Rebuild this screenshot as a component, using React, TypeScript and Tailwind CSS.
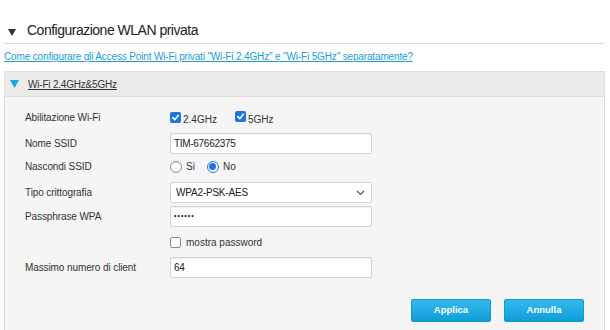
import React from "react";

const font = { fontFamily: "'Liberation Sans', Arial, sans-serif" };

const CheckBox = ({ checked }: { checked: boolean }) =>
  checked ? (
    <span className="inline-flex h-[11px] w-[11px] items-center justify-center rounded-[2px] bg-[#1b76e4]">
      <svg width="9" height="9" viewBox="0 0 10 10">
        <path d="M2 5.2 L4.2 7.4 L8.2 2.6" fill="none" stroke="#fff" strokeWidth="1.8" strokeLinecap="round" strokeLinejoin="round" />
      </svg>
    </span>
  ) : (
    <span className="inline-block h-[11px] w-[11px] rounded-[2px] border border-[#8a8a8a] bg-white" />
  );

const Radio = ({ checked }: { checked: boolean }) =>
  checked ? (
    <span className="inline-flex h-[12px] w-[12px] items-center justify-center rounded-full border border-[#1b76e4] bg-white">
      <span className="h-[7px] w-[7px] rounded-full bg-[#1b76e4]" />
    </span>
  ) : (
    <span className="inline-block h-[12px] w-[12px] rounded-full border border-[#8a8a8a] bg-white" />
  );

const Field = ({ children }: { children?: React.ReactNode }) => (
  <div className="flex h-[21px] w-[202px] items-center rounded-[2px] border border-[#d3d3d3] bg-white px-[3px] text-[10px] tracking-[-0.3px] text-[#222] shadow-[inset_0_1px_1px_rgba(0,0,0,0.06)]">
    {children}
  </div>
);

const Row = ({
  label,
  className,
  children,
}: {
  label?: string;
  className: string;
  children: React.ReactNode;
}) => (
  <div className={`flex items-center ${className}`}>
    <div className="w-[145px] text-[10px] tracking-[-0.1px] text-[#333]">{label}</div>
    {children}
  </div>
);

export default function App() {
  return (
    <div className="h-[330px] w-[610px] overflow-hidden bg-white" style={font}>
      <div className="ml-[3px] w-[602px] pt-[20px]">
        <div className="flex h-[24px] items-center border-b border-[#dcdcdc] pb-[2px]">
          <svg width="8" height="7" viewBox="0 0 8 7" className="ml-[5px] mt-[3px]">
            <path d="M0 0 H8 L4 7 Z" fill="#333" />
          </svg>
          <span className="ml-[11px] text-[14px] tracking-[-0.5px] text-[#222]">Configurazione WLAN privata</span>
        </div>
        <div className="mt-[6px] h-[14px] text-[10px] leading-[14px] tracking-[-0.15px]">
          <a className="ml-[1px] text-[#1b9bd7] underline">
            Come configurare gli Access Point Wi-Fi privati "Wi-Fi 2.4GHz" e "Wi-Fi 5GHz" separatamente?
          </a>
        </div>
        <div className="ml-[1px] mt-[7px] border border-[#dedede]">
          <div className="flex h-[25px] items-center border-b border-[#e0e0e0] bg-[#ebebeb]">
            <svg width="9" height="8" viewBox="0 0 9 8" className="ml-[5px]">
              <path d="M0 0 H9 L4.5 8 Z" fill="#1da6e2" />
            </svg>
            <span className="ml-[9px] text-[10px] tracking-[-0.2px] text-[#333] underline">Wi-Fi 2.4GHz&amp;5GHz</span>
          </div>
          <div className="h-[240px] bg-[#f5f5f5] pl-[20px] pt-[9px]">
            <Row label="Abilitazione Wi-Fi" className="h-[22px]">
              <div className="flex items-center text-[10px] text-[#333]">
                <CheckBox checked />
                <span className="ml-[2px] mt-[4px]">2.4GHz</span>
                <span className="ml-[18px]"><CheckBox checked /></span>
                <span className="ml-[2px] mt-[4px]">5GHz</span>
              </div>
            </Row>
            <Row label="Nome SSID" className="mt-[5px] h-[21px]">
              <Field>TIM-67662375</Field>
            </Row>
            <Row label="Nascondi SSID" className="mt-[2px] h-[21px]">
              <div className="flex items-center text-[10px] text-[#333]">
                <Radio checked={false} />
                <span className="ml-[4px]">Si</span>
                <span className="ml-[12px]"><Radio checked /></span>
                <span className="ml-[4px]">No</span>
              </div>
            </Row>
            <Row label="Tipo crittografia" className="mt-[5px] h-[21px]">
              <div className="flex h-[21px] w-[202px] items-center justify-between rounded-[2px] border border-[#d3d3d3] bg-white pl-[5px] pr-[6px] text-[10px] tracking-[-0.2px] text-[#222]">
                <span>WPA2-PSK-AES</span>
                <svg width="9" height="6" viewBox="0 0 9 6">
                  <path d="M1 1 L4.5 4.5 L8 1" fill="none" stroke="#555" strokeWidth="1.1" />
                </svg>
              </div>
            </Row>
            <Row label="Passphrase WPA" className="mt-[3px] h-[21px]">
              <Field>
                <span className="text-[7px] tracking-[1px] text-[#111]">••••••</span>
              </Field>
            </Row>
            <Row className="mt-[5px] h-[20px]">
              <div className="flex items-center text-[10px] text-[#333]">
                <CheckBox checked={false} />
                <span className="ml-[5px] mt-[1px]">mostra password</span>
              </div>
            </Row>
            <Row label="Massimo numero di client" className="mt-[5px] h-[21px]">
              <Field>64</Field>
            </Row>
            <div className="mt-[21px] flex justify-end gap-[13px] pr-[20px]">
              <button className="h-[23px] w-[80px] rounded-[2px] border border-[#1496d0] bg-gradient-to-b from-[#32baef] to-[#0e9dd8] text-[9.5px] font-bold text-white">
                Applica
              </button>
              <button className="h-[23px] w-[80px] rounded-[2px] border border-[#1496d0] bg-gradient-to-b from-[#32baef] to-[#0e9dd8] text-[9.5px] font-bold text-white">
                Annulla
              </button>
            </div>
          </div>
        </div>
      </div>
    </div>
  );
}
